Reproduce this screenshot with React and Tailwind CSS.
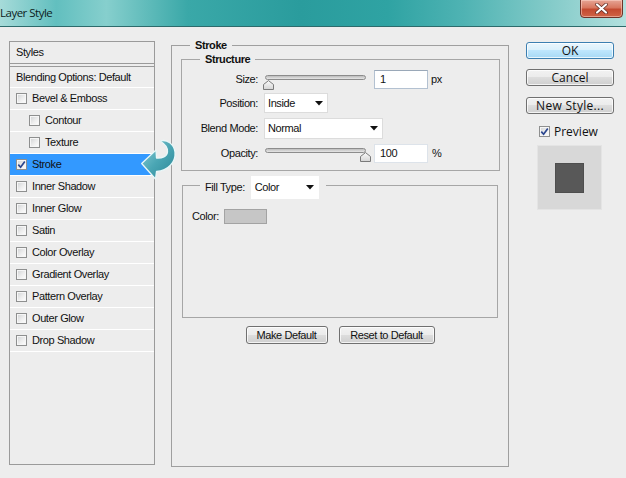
import React from "react";

function Check({ checked }) {
  return (
    <span className="flex h-[11px] w-[11px] shrink-0 items-center justify-center border border-[#8e8f8f] bg-[linear-gradient(135deg,#cfd1d3_0%,#eeeeee_55%,#ffffff_100%)] shadow-[inset_0_0_0_1px_#f6f6f6]">
      {checked && (
        <svg width="9" height="9" viewBox="0 0 9 9">
          <path d="M1.3 4.6 L3.6 7.2 L7.8 1.4" fill="none" stroke="#2b468f" strokeWidth="1.7" />
        </svg>
      )}
    </span>
  );
}

function Caret() {
  return (
    <svg width="8" height="5" viewBox="0 0 8 5" className="shrink-0">
      <path d="M0 0 H8 L4 4.5 Z" fill="#111" />
    </svg>
  );
}

function Thumb() {
  return (
    <svg width="11" height="10" viewBox="0 0 11 10">
      <defs>
        <linearGradient id="tg" x1="0" y1="0" x2="0" y2="1">
          <stop offset="0" stopColor="#fbfbfb" />
          <stop offset="1" stopColor="#d4d4d4" />
        </linearGradient>
      </defs>
      <path d="M0.5 9.5 V4.5 L5.5 0.6 L10.5 4.5 V9.5 Z" fill="url(#tg)" stroke="#7a7a7a" strokeWidth="1" />
    </svg>
  );
}

function Slider({ right, top }) {
  return (
    <div className="relative h-full w-[108px] shrink-0">
      <div
        className={`ml-[2px] mr-[5px] h-[5px] rounded-full border border-[#8c8c8c] bg-[linear-gradient(#bdbdbd,#e6e6e6)] ${top === 5 ? "mt-[5px]" : "mt-[4px]"}`}
      />
      <div className={`absolute ${right ? "left-[97px]" : "left-0"} ${top === 5 ? "top-[5px]" : "top-[4px]"} h-[10px] w-[11px]`}>
        <Thumb />
      </div>
    </div>
  );
}

function WinButton({ children, className = "", primary = false }) {
  return (
    <div
      className={`flex items-center justify-center rounded-[3px] border ${
        primary
          ? "border-[#3c7fb1] bg-[linear-gradient(#eaf6fd_0%,#d9f0fc_49%,#bee6fd_50%,#a7d9f5_100%)]"
          : "border-[#707070] bg-[linear-gradient(#f2f2f2_0%,#ebebeb_49%,#dddddd_50%,#cfcfcf_100%)]"
      } shadow-[inset_0_0_0_1px_rgba(255,255,255,0.75)] ${className}`}
    >
      {children}
    </div>
  );
}

const rows = [
  { t: "Bevel & Emboss" },
  { t: "Contour", sub: true },
  { t: "Texture", sub: true },
  { t: "Stroke", checked: true, sel: true },
  { t: "Inner Shadow" },
  { t: "Inner Glow" },
  { t: "Satin" },
  { t: "Color Overlay" },
  { t: "Gradient Overlay" },
  { t: "Pattern Overlay" },
  { t: "Outer Glow" },
  { t: "Drop Shadow" },
];

export default function App() {
  return (
    <div className="relative h-[478px] w-[626px] overflow-hidden bg-[#ededed] font-['Liberation_Sans',Arial,sans-serif] text-[11px] leading-[13px] tracking-[-0.4px] text-[#111]">
      {/* Title bar */}
      <div className="flex h-[27px] items-start justify-between border-b border-[#2d6b6c] bg-[linear-gradient(90deg,#a6dbd9_0%,#62bfbf_9%,#86cfcd_17%,#3aa8a8_30%,#2a9c9d_48%,#2fa3a3_62%,#4fb3b3_74%,#84cbc9_88%,#b2e0de_100%)]">
        <span className="mt-[6px] font-['Open_Sans',sans-serif] text-[11.5px] leading-[14px] tracking-[-0.5px] text-[#0c1c1c]">
          Layer Style
        </span>
        <div className="mr-[3px] mt-[-1px] flex h-[19px] w-[43px] items-center justify-center rounded-b-[4px] border border-[#6e3329] bg-[linear-gradient(#e6a595_0%,#d8775f_45%,#c34a30_55%,#d06446_100%)] shadow-[inset_0_0_0_1px_rgba(255,220,210,0.5)]">
          <svg width="13" height="11" viewBox="0 0 13 11">
            <path d="M2 1.5 L11 9.5 M11 1.5 L2 9.5" stroke="#5a2a22" strokeWidth="3.6" strokeLinecap="round" />
            <path d="M2 1.5 L11 9.5 M11 1.5 L2 9.5" stroke="#ffffff" strokeWidth="2.2" strokeLinecap="round" />
          </svg>
        </div>
      </div>

      {/* Body */}
      <div className="flex items-start pl-[9px]">
        {/* Left styles list */}
        <div className="mt-[14px] flex h-[424px] w-[146px] flex-col border border-[#9a9a9a]">
          <div className="flex h-[22px] items-center border-b border-[#9a9a9a] pl-[6px]">Styles</div>
          <div className="mt-[2px] flex h-[22px] items-center border-y border-t-[#9a9a9a] border-b-white pl-[6px]">
            Blending Options: Default
          </div>
          {rows.map((r) => (
            <div
              key={r.t}
              className={`flex h-[22px] items-center gap-[5px] border-b border-white ${r.sub ? "pl-[19px]" : "pl-[6px]"} ${
                r.sel ? "bg-[#3399ff]" : ""
              }`}
            >
              <Check checked={r.checked} />
              <span>{r.t}</span>
            </div>
          ))}
        </div>

        {/* Middle */}
        <fieldset className="ml-[16px] mt-[12px] h-[428px] w-[338px] min-w-0 border border-[#9f9f9f]">
          <legend className="ml-[18px] px-[5px] font-bold leading-[13px]">Stroke</legend>
          <div className="px-[9px] pt-[1px]">
            <fieldset className="w-[319px] min-w-0 border border-[#a6a6a6] pb-[7px]">
              <legend className="ml-[18px] px-[5px] font-bold leading-[13px]">Structure</legend>
              <div className="mt-[4px] flex h-[19px] items-center">
                <span className="w-[76px] text-right">Size:</span>
                <div className="ml-[5px] h-full">
                  <Slider top={5} />
                </div>
                <div className="ml-[3px] flex h-[19px] w-[54px] items-center border border-[#b3c1d1] border-t-[#9aa8b8] bg-white pl-[5px]">
                  1
                </div>
                <span className="ml-[3px]">px</span>
              </div>
              <div className="mt-[4px] flex h-[20px] items-center">
                <span className="w-[76px] text-right">Position:</span>
                <div className="ml-[6px] flex h-[20px] w-[64px] items-center justify-between border border-[#dcdcdc] bg-white pl-[3px] pr-[4px]">
                  <span>Inside</span>
                  <Caret />
                </div>
              </div>
              <div className="mt-[5px] flex h-[21px] items-center">
                <span className="w-[76px] text-right">Blend Mode:</span>
                <div className="ml-[6px] flex h-[21px] w-[119px] items-center justify-between border border-[#dcdcdc] bg-white pl-[3px] pr-[4px]">
                  <span>Normal</span>
                  <Caret />
                </div>
              </div>
              <div className="mt-[5px] flex h-[19px] items-center">
                <span className="w-[76px] text-right">Opacity:</span>
                <div className="ml-[5px] h-full">
                  <Slider right top={4} />
                </div>
                <div className="ml-[3px] flex h-[19px] w-[54px] items-center border border-[#dde3ea] bg-white pl-[5px]">
                  100
                </div>
                <span className="ml-[4px]">%</span>
              </div>
            </fieldset>

            <fieldset className="ml-[1px] w-[316px] min-w-0 border border-[#a6a6a6]">
              <legend className="ml-[17px] pl-[5px] pr-[7px] pt-[5px]">
                <div className="flex items-center">
                  <span>Fill Type:</span>
                  <div className="ml-[6px] flex h-[23px] w-[68px] items-center justify-between bg-white pl-[4px] pr-[5px]">
                    <span>Color</span>
                    <Caret />
                  </div>
                </div>
              </legend>
              <div className="h-[118px] pl-[9px] pt-[10px]">
                <div className="flex h-[15px] items-center">
                  <span>Color:</span>
                  <div className="ml-[5px] h-[15px] w-[43px] border border-[#a3a3a3] bg-[#c6c6c6]" />
                </div>
              </div>
            </fieldset>

            <div className="mt-[8px] flex justify-center gap-[11px]">
              <WinButton className="h-[18px] w-[82px]">Make Default</WinButton>
              <WinButton className="h-[18px] w-[96px]">Reset to Default</WinButton>
            </div>
          </div>
        </fieldset>

        {/* Right column */}
        <div className="ml-[17px] mt-[15px] flex w-[88px] flex-col font-['Open_Sans',sans-serif] text-[12px] leading-[15px] tracking-normal text-[#111]">
          <WinButton primary className="h-[17px]">OK</WinButton>
          <WinButton className="mt-[10px] h-[17px]">Cancel</WinButton>
          <WinButton className="mt-[11px] h-[17px] tracking-[0.3px]">New Style...</WinButton>
          <div className="mt-[11px] flex h-[12px] items-center gap-[4px] pl-[13px]">
            <Check checked />
            <span>Preview</span>
          </div>
          <div className="ml-[11px] mt-[8px] flex h-[65px] w-[65px] items-center justify-center border border-[#e4e4e4] bg-[#d8d8d8]">
            <div className="h-[30px] w-[29px] border border-[#4e4e4e] bg-[#585858]" />
          </div>
        </div>
      </div>

      {/* Pointer arrow overlay */}
      <svg className="absolute left-[140px] top-[136px]" width="38" height="46" viewBox="0 0 38 46">
        <defs>
          <linearGradient id="ag" x1="0" y1="0" x2="1" y2="1">
            <stop offset="0" stopColor="#8fd0d9" />
            <stop offset="0.5" stopColor="#4aa6b4" />
            <stop offset="1" stopColor="#2a8595" />
          </linearGradient>
        </defs>
        <path
          d="M1.7 27.5 L16 14 L16.5 22 C22 22.5 27 20.5 27.5 16 C28 12 25 8 20 5 C27 3 34 8 35 16 C36 26 28 35 16.5 35.5 L15.5 43 Z"
          fill="url(#ag)"
          stroke="#e9f7f8"
          strokeWidth="1.3"
          strokeLinejoin="round"
        />
      </svg>
    </div>
  );
}
